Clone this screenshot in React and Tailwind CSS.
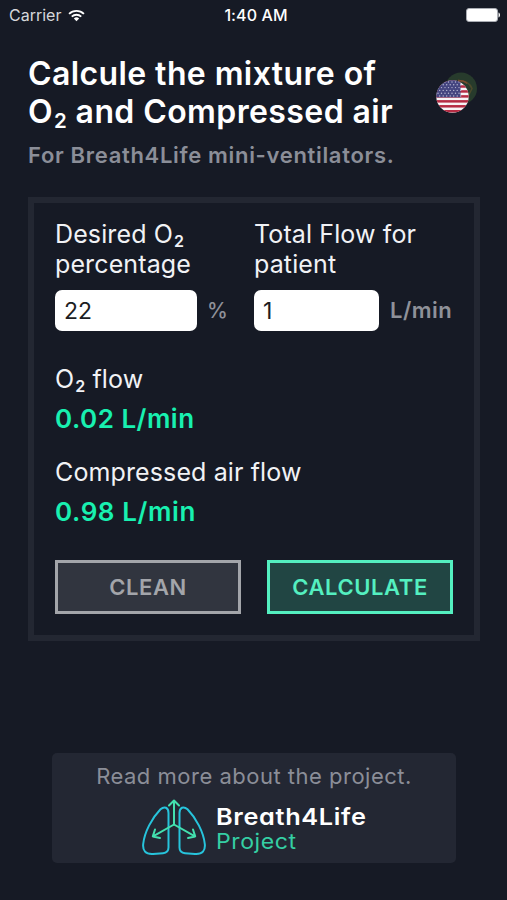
import React from "react";

const O2 = () => (
  <>
    O<span className="inline-block ml-px text-[0.64em] leading-none font-semibold align-[-0.26em]">2</span>
  </>
);

const results = [
  { id: "o2", label: <><O2 /> flow</>, value: "0.02 L/min", valueTracking: "tracking-[0.5px]" },
  { id: "air", label: "Compressed air flow", value: "0.98 L/min", valueTracking: "tracking-[0.6px]" },
];

function StatusBar() {
  return (
    <div className="grid grid-cols-3 items-center h-[30px] pl-[9px] pr-[6px] text-base text-white">
      <div className="flex items-center gap-[7px] text-[#d5d7db]">
        <span>Carrier</span>
        <svg width="17" height="13" viewBox="0 0 18 14" fill="none" stroke="#fff" strokeWidth="2">
          <path d="M1 5.2a11.6 11.6 0 0 1 16 0" />
          <path d="M3.9 8.2a7.4 7.4 0 0 1 10.2 0" />
          <path d="M9 13.2 6.1 10.3a4.2 4.2 0 0 1 5.8 0z" fill="#fff" stroke="none" />
        </svg>
      </div>
      <span className="justify-self-center pl-0.5 font-medium tracking-[0.1px] whitespace-nowrap">1:40 AM</span>
      <svg className="justify-self-end" width="35" height="14" viewBox="0 0 35 14">
        <rect x="0.5" y="0.5" width="31" height="13" rx="2.5" fill="#fff" stroke="#a9acb3" />
        <path d="M32.500 4.500c1 .3 1.500 1.300 1.500 2.500s-.5 2.200-1.500 2.500z" fill="#fff" />
      </svg>
    </div>
  );
}

/* Language switch: active flag in front, the other one dimmed behind */
function LanguageSwitch() {
  return (
    <svg width="42" height="42" viewBox="0 0 42 42">
      <defs>
        <clipPath id="front"><circle cx="16.500" cy="24.500" r="16.200" /></clipPath>
        <clipPath id="back"><circle cx="25" cy="16.500" r="16" /></clipPath>
      </defs>
      <g clipPath="url(#back)">
        <rect width="42" height="42" fill="#273b2c" />
        <path d="M22 8.500c7 0 12 3 14 8l-4 8" fill="none" stroke="#4d4a2b" strokeWidth="1.500" />
        <path d="M22 8.500c4 0 7 1 9 3" fill="none" stroke="#7c4a2e" strokeWidth="1.500" />
      </g>
      <g clipPath="url(#front)">
        <rect y="8" width="34" height="34" fill="#f7f3f5" />
        {[0, 1, 2, 3, 4, 5, 6].map((i) => (
          <rect key={i} y={8.3 + i * 4.95} width="34" height="2.500" fill="#b52b43" />
        ))}
        <rect y="8" width="24.500" height="17.300" fill="#444580" />
        {[0, 1, 2, 3, 4, 5].map((row) =>
          [0, 1, 2, 3, 4, 5, 6].map((col) => (
            <circle key={`${row}-${col}`} cx={2 + col * 3.5 + (row % 2) * 1.7} cy={10 + row * 2.8} r="0.700" fill="#b9b9d3" />
          ))
        )}
      </g>
    </svg>
  );
}

function Lungs() {
  return (
    <svg width="64" height="57" viewBox="0 0 64 57" fill="none" strokeLinecap="round" strokeLinejoin="round">
      <g stroke="#27c4dc" strokeWidth="2">
        <path d="M26.500 14v34.500c0 4-2.300 5.400-5.500 5.700l-10 .8C3.500 55.500.500 51.500 1.200 45 2.500 33 10 19 18.500 10.300c4-3.600 8-1.800 8 3.700z" />
        <path d="M37.500 14v34.500c0 4 2.300 5.400 5.500 5.700l10 .8c7.500.5 10.500-3.500 9.800-10C61.500 33 54 19 45.500 10.300c-4-3.600-8-1.800-8 3.700z" />
      </g>
      <g stroke="#43e0ae" strokeWidth="2">
        <path d="M32 25.500V1.500M27 6.500l5-5 5 5" />
        <path d="M32 25.500 11 37.300M13 30.500l-2.200 6.900 7.200 1.600" />
        <path d="m32 25.500 21 11.800M51 30.500l2.200 6.900-7.200 1.600" />
      </g>
    </svg>
  );
}

export default function App() {
  return (
    <div className="w-full h-[900px] bg-[#161a25] font-['Inter',sans-serif] overflow-hidden">
      <StatusBar />

      {/* Header */}
      <header className="flex justify-between pt-[25px] pl-7 pr-[29px]">
        <div className="whitespace-nowrap">
          <h1 className="h-[76px] text-[32px] leading-[38px] font-semibold tracking-[0.4px] text-white">
            Calcule the mixture of<br />
            <O2 /> and Compressed air
          </h1>
          <p className="mt-[9px] text-[22px] leading-[30px] font-semibold tracking-[0.68px] text-[#8b8e98]">
            For Breath4Life mini-ventilators.
          </p>
        </div>
        <button className="self-start mt-[17px]" aria-label="Change language">
          <LanguageSwitch />
        </button>
      </header>

      {/* Calculator */}
      <main className="mt-[27px] ml-7 mr-[27px] h-[444px] border-[6px] border-[#232732] px-[21px] pt-4 text-[#f1f2f5]">
        <div className="flex">
          <div className="w-[199px]">
            <label className="block h-[60px] text-[25px] leading-[30px] whitespace-nowrap tracking-[0.12px]">
              Desired <O2 /><br />percentage
            </label>
            <div className="flex items-center mt-[11px]">
              <input
                className="w-[142px] h-[41px] rounded-[7px] bg-white px-[9px] text-[23px] text-[#1d1d22]"
                defaultValue="22"
              />
              <span className="ml-2.5 text-[21px] font-medium text-[#8f9199]">%</span>
            </div>
          </div>
          <div className="w-[199px]">
            <label className="block h-[60px] text-[25px] leading-[30px] whitespace-nowrap tracking-[0.12px]">
              Total Flow for<br />patient
            </label>
            <div className="flex items-center mt-[11px]">
              <input
                className="w-[125px] h-[41px] rounded-[7px] bg-white px-[9px] text-[23px] text-[#1d1d22]"
                defaultValue="1"
              />
              <span className="ml-[11px] text-[22px] font-semibold tracking-[0.5px] text-[#8f9199]">L/min</span>
            </div>
          </div>
        </div>

        <div className="mt-7 flex flex-col gap-[13px]">
          {results.map((r) => (
            <div key={r.id}>
              <p className="text-[25px] leading-10 tracking-[0.12px]">{r.label}</p>
              <p className={`text-[26px] leading-10 font-semibold text-[#18f0b0] ${r.valueTracking}`}>{r.value}</p>
            </div>
          ))}
        </div>

        <div className="flex justify-between mt-7">
          <button className="w-[186px] h-[54px] border-[3px] border-[#a3a5aa] bg-[#31353f] text-[22px] font-semibold tracking-[0.6px] text-[#a3a5aa]">
            CLEAN
          </button>
          <button className="w-[186px] h-[54px] border-[3px] border-[#54efc0] bg-[#214543] text-[22px] font-semibold tracking-[0.6px] text-[#54efc0]">
            CALCULATE
          </button>
        </div>
      </main>

      {/* Project link */}
      <footer className="mt-28 ml-[52px] w-[404px] h-[110px] rounded-[5px] bg-[#232733] pt-2">
        <p className="text-center text-[22px] leading-[30px] tracking-[0.5px] text-[#8b8e98]">
          Read more about the project.
        </p>
        <div className="flex items-start mt-2 ml-[90px]">
          <Lungs />
          <div className="ml-2.5 mt-1.5 whitespace-nowrap origin-left scale-x-[1.1] [font-feature-settings:'cv11']">
            <p className="text-[23px] leading-[25px] font-semibold tracking-[0.6px] text-white">Breath4Life</p>
            <p className="text-[21px] leading-6 tracking-[0.5px] text-[#35cfa4]">Project</p>
          </div>
        </div>
      </footer>
    </div>
  );
}
